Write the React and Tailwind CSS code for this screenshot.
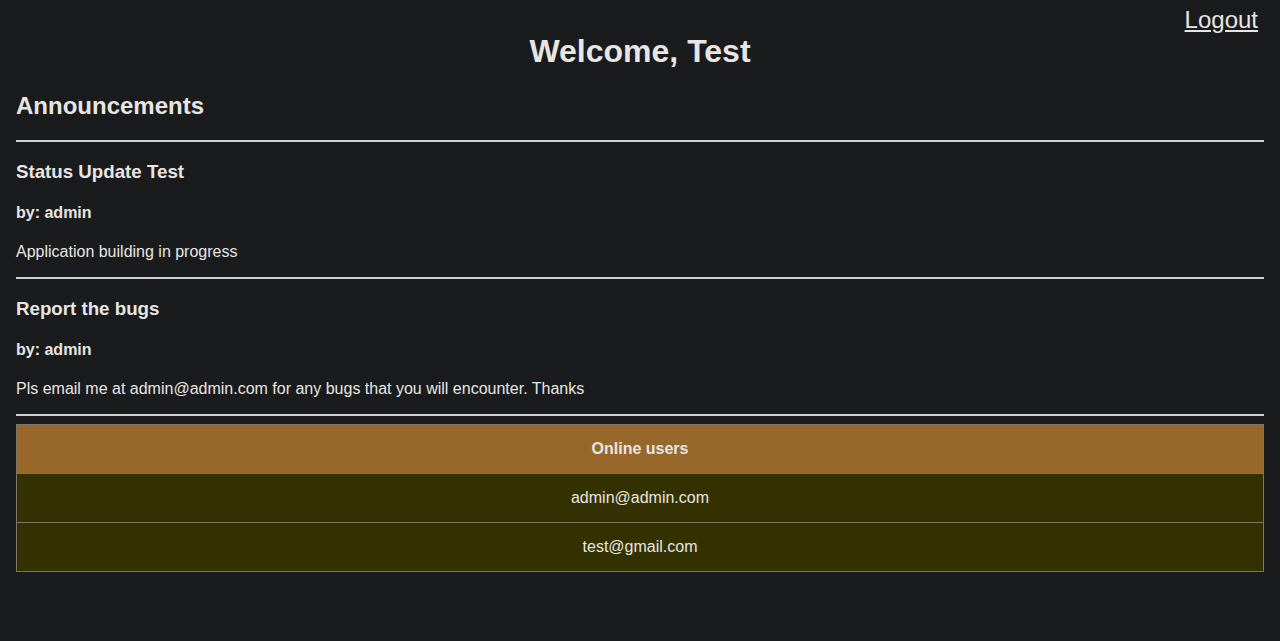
const announcements = [
  { title: 'Status Update Test', by: 'admin', body: 'Application building in progress' },
  { title: 'Report the bugs', by: 'admin', body: 'Pls email me at admin@admin.com for any bugs that you will encounter. Thanks' },
]

const onlineUsers = ['admin@admin.com', 'test@gmail.com']

function Rule() {
  return <div className="h-[2px] bg-[#d3d0cb]" />
}

function Announcement({ title, by, body }) {
  return (
    <div>
      <h3 className="pt-[19px] text-[18.72px] leading-[21.5px] font-bold">{title}</h3>
      <h4 className="pt-[21.5px] text-[16px] leading-[18.5px] font-bold">by: {by}</h4>
      <p className="pt-[20.5px] pb-[15.5px] text-[16px] leading-[18.5px]">{body}</p>
      <Rule />
    </div>
  )
}

export default function App() {
  return (
    <div className="min-h-screen bg-[#1a1b1d] px-4 text-[#e8e6e3] font-['Liberation_Sans',Arial,sans-serif]">
      <div className="relative">
        <a href="#" className="absolute right-[6px] top-[6px] text-[24px] leading-[27.6px] underline">Logout</a>
        <h1 className="pt-[33px] text-center text-[32px] leading-[37px] font-bold">Welcome, Test</h1>
      </div>
      <h2 className="pt-[22px] pb-[20px] text-[24px] leading-[28px] font-bold">Announcements</h2>
      <Rule />
      {announcements.map(a => (
        <Announcement key={a.title} {...a} />
      ))}
      <div className="mt-[8px] border border-[#7d7766]">
        <div className="h-[49px] flex items-center justify-center bg-[#98672a] font-bold text-[16px] border-b border-[#7d7766]">
          Online users
        </div>
        {onlineUsers.map((u, i) => (
          <div
            key={u}
            className={`flex items-center justify-center bg-[#333100] text-[16px] ${i < onlineUsers.length - 1 ? 'h-[49px] border-b border-[#7d7766]' : 'h-[48px]'}`}
          >
            {u}
          </div>
        ))}
      </div>
    </div>
  )
}
